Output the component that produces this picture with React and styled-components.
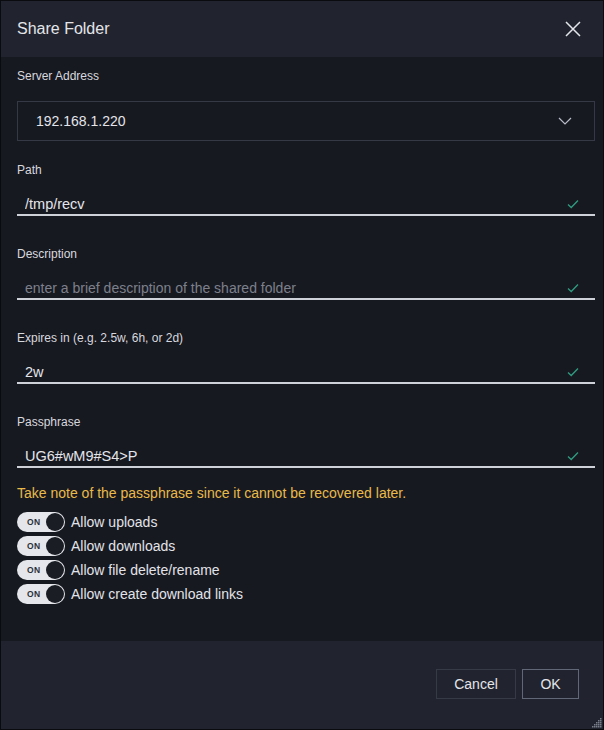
import styled, { createGlobalStyle } from 'styled-components';
import { useState } from 'react';

const GlobalStyle = createGlobalStyle`
  html, body {
    margin: 0;
    padding: 0;
    background: #171921;
  }
  * { box-sizing: border-box; }
`;

const fields = [
  { label: "Path", value: "/tmp/recv" },
  { label: "Description", value: "", placeholder: "enter a brief description of the shared folder" },
  { label: "Expires in (e.g. 2.5w, 6h, or 2d)", value: "2w" },
  { label: "Passphrase", value: "UG6#wM9#S4>P" },
];

const permissions = [
  "Allow uploads",
  "Allow downloads",
  "Allow file delete/rename",
  "Allow create download links",
];

function CheckIcon() {
  return (
    <svg width="12" height="10" viewBox="0 0 12 10" fill="none">
      <path d="M1 5.5 L4.2 8.5 L11 1.5" stroke="#2f9c80" strokeWidth="1.3" />
    </svg>
  );
}

export default function App() {
  const [perms, setPerms] = useState(permissions.map(() => true));

  const toggle = (i) => setPerms(prev => prev.map((p, j) => (j === i ? !p : p)));

  return (
    <>
      <GlobalStyle />
      <Dialog>
        <Header>
          <Title>Share Folder</Title>
          <CloseButton aria-label="close">
            <svg width="16" height="16" viewBox="0 0 16 16">
              <path d="M1 1 L15 15 M15 1 L1 15" stroke="#e4e5ea" strokeWidth="1.5" />
            </svg>
          </CloseButton>
        </Header>

        <Body>
          <Label>Server Address</Label>
          <Select>
            <span>192.168.1.220</span>
            <svg width="14" height="8" viewBox="0 0 14 8" fill="none">
              <path d="M1 1 L7 7 L13 1" stroke="#b9bcc6" strokeWidth="1.2" />
            </svg>
          </Select>

          {fields.map(f => (
            <Field key={f.label}>
              <Label>{f.label}</Label>
              <InputRow>
                <Input defaultValue={f.value} placeholder={f.placeholder} />
                <CheckIcon />
              </InputRow>
            </Field>
          ))}

          <Warning>Take note of the passphrase since it cannot be recovered later.</Warning>

          <Toggles>
            {permissions.map((p, i) => (
              <ToggleRow key={p}>
                <Switch $on={perms[i]} onClick={() => toggle(i)}>
                  <SwitchText>{perms[i] ? "ON" : "OFF"}</SwitchText>
                  <Knob />
                </Switch>
                <ToggleLabel>{p}</ToggleLabel>
              </ToggleRow>
            ))}
          </Toggles>
        </Body>

        <Footer>
          <Button>Cancel</Button>
          <Button $primary>OK</Button>
          <Grip width="12" height="12" viewBox="0 0 12 12">
            {[[10,2],[8,4],[10,4],[6,6],[8,6],[10,6],[4,8],[6,8],[8,8],[10,8],[2,10],[4,10],[6,10],[8,10],[10,10]].map(([x, y]) => (
              <rect key={`${x}-${y}`} x={x} y={y} width="1.5" height="1.5" fill="#7a7e8c" />
            ))}
          </Grip>
        </Footer>
      </Dialog>
    </>
  );
}

//============= Styled Components =============
const Dialog = styled.div`
  width: 604px;
  height: 730px;
  display: flex;
  flex-direction: column;
  background: #171921;
  border: 1px solid #0a0b0e;
  font-family: "Liberation Sans", Arial, sans-serif;
  color: #e2e3e8;
`;

const Header = styled.div`
  height: 56px;
  flex-shrink: 0;
  display: flex;
  align-items: center;
  justify-content: space-between;
  padding: 0 16px 0 16px;
  background: #21242e;
`;

const Title = styled.h1`
  margin: 0;
  font-size: 16px;
  font-weight: 400;
  color: #e4e5ea;
`;

const CloseButton = styled.button`
  background: none;
  border: none;
  padding: 0;
  margin-right: 6px;
  display: flex;
  cursor: pointer;
`;

const Body = styled.div`
  flex: 1;
  padding: 11px 8px 0 16px;
  display: flex;
  flex-direction: column;
`;

const Label = styled.div`
  font-size: 12px;
  line-height: 16px;
  color: #d7d8de;
`;

const Select = styled.div`
  margin-top: 17px;
  height: 40px;
  border: 1px solid #353845;
  display: flex;
  align-items: center;
  justify-content: space-between;
  padding: 0 22px 0 18px;
  font-size: 14px;
  color: #e4e5ea;
`;

const Field = styled.div`
  display: flex;
  flex-direction: column;
  margin-top: 21px;
  & + & {
    margin-top: 30px;
  }
`;

const InputRow = styled.div`
  margin-top: 16px;
  display: flex;
  align-items: center;
  gap: 8px;
  height: 22px;
  padding: 0 16px 0 8px;
  border-bottom: 2px solid #cfd1d9;
`;

const Input = styled.input`
  flex: 1;
  background: transparent;
  border: none;
  outline: none;
  padding: 0;
  font-family: inherit;
  font-size: 14.5px;
  color: #e4e5ea;

  &::placeholder {
    font-size: 14px;
    color: #7d808b;
  }
`;

const Warning = styled.div`
  margin-top: 17px;
  font-size: 14px;
  line-height: 16px;
  color: #e9b949;
`;

const Toggles = styled.div`
  margin-top: 11px;
  display: flex;
  flex-direction: column;
  gap: 4px;
`;

const ToggleRow = styled.div`
  display: flex;
  align-items: center;
  gap: 6px;
  height: 20px;
`;

const Switch = styled.div`
  width: 48px;
  height: 20px;
  border-radius: 10px;
  background: ${p => (p.$on ? "#e4e6eb" : "#4a4d58")};
  display: flex;
  align-items: center;
  justify-content: space-between;
  padding: 0 1px 0 10px;
  cursor: pointer;
`;

const SwitchText = styled.span`
  font-size: 8.5px;
  font-weight: 700;
  color: #2c2f38;
  letter-spacing: 0.3px;
`;

const Knob = styled.span`
  width: 18px;
  height: 18px;
  border-radius: 50%;
  background: #1b1d25;
`;

const ToggleLabel = styled.span`
  font-size: 14px;
  color: #e2e3e8;
`;

const Footer = styled.div`
  position: relative;
  height: 88px;
  flex-shrink: 0;
  background: #21242e;
  display: flex;
  align-items: flex-start;
  justify-content: flex-end;
  gap: 6px;
  padding: 28px 24px 0 0;
`;

const Button = styled.button`
  height: 30px;
  padding: 0 17px;
  min-width: ${p => (p.$primary ? "57px" : "80px")};
  background: transparent;
  border: 1px solid ${p => (p.$primary ? "#626778" : "#363946")};
  color: #e4e5ea;
  font-family: inherit;
  font-size: 14px;
  cursor: pointer;
`;

const Grip = styled.svg`
  position: absolute;
  right: 1px;
  bottom: 1px;
`;
